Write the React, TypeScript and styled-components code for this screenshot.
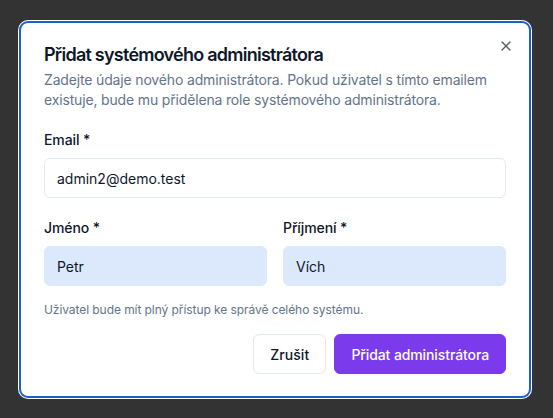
import React from "react";
import styled, { createGlobalStyle } from "styled-components";
import { X } from "lucide-react";

const GlobalStyle = createGlobalStyle`
  html, body {
    margin: 0;
    padding: 0;
    background: #333333;
  }
  body {
    font-family: Inter, "Noto Sans", "Liberation Sans", sans-serif;
    -webkit-font-smoothing: antialiased;
  }
  * { box-sizing: border-box; }
`;

const Overlay = styled.div`
  width: 553px;
  height: 418px;
  padding: 21px 0 0 19px;
  background: #333333;
`;

const Dialog = styled.div`
  position: relative;
  width: 512px;
  height: 377px;
  padding: 25px 25px 24px 25px;
  background: #ffffff;
  border-radius: 9px;
  box-shadow: inset 0 0 0 2px #1c5fd0, 0 0 0 1px #ffffff;
  display: flex;
  flex-direction: column;
`;

const CloseButton = styled.button`
  position: absolute;
  top: 17px;
  right: 17px;
  width: 16px;
  height: 16px;
  padding: 0;
  border: none;
  background: transparent;
  color: #0f172a;
  opacity: 0.7;
  display: flex;
  align-items: center;
  justify-content: center;
  cursor: pointer;
`;

const Header = styled.div`
  display: flex;
  flex-direction: column;
  gap: 6px;
`;

const Title = styled.h2`
  margin: 0;
  font-size: 18px;
  line-height: 18px;
  font-weight: 600;
  letter-spacing: -0.75px;
  color: #0f172a;
`;

const Description = styled.p`
  margin: 0;
  font-size: 14px;
  line-height: 20px;
  letter-spacing: -0.16px;
  color: #64748b;
`;

const Form = styled.div`
  margin-top: 20px;
  display: flex;
  flex-direction: column;
  gap: 20px;
`;

const Row = styled.div`
  display: grid;
  grid-template-columns: 1fr 1fr;
  gap: 16px;
`;

const Field = styled.div`
  display: flex;
  flex-direction: column;
  gap: 8px;
`;

const Label = styled.label`
  font-size: 14px;
  line-height: 20px;
  font-weight: 500;
  letter-spacing: -0.1px;
  color: #0f172a;
`;

const Input = styled.div<{ $autofill?: boolean }>`
  height: 40px;
  padding: 0 12px;
  display: flex;
  align-items: center;
  border-radius: 6px;
  border: 1px solid ${(p) => (p.$autofill ? "#dce9fc" : "#e2e8f0")};
  background: ${(p) => (p.$autofill ? "#dce9fc" : "#ffffff")};
  font-size: 14px;
  color: #0f172a;
`;

const Hint = styled.p`
  margin: 16px 0 0 0;
  font-size: 12px;
  line-height: 16px;
  letter-spacing: -0.07px;
  color: #64748b;
`;

const Footer = styled.div`
  margin-top: 16px;
  display: flex;
  justify-content: flex-end;
  gap: 8px;
`;

const Button = styled.button<{ $primary?: boolean }>`
  height: 40px;
  padding: 0 16px;
  border-radius: 6px;
  font-family: inherit;
  font-size: 14px;
  font-weight: 500;
  letter-spacing: ${(p) => (p.$primary ? "-0.1px" : "0.1px")};
  cursor: pointer;
  border: 1px solid ${(p) => (p.$primary ? "#7c3aed" : "#e2e8f0")};
  background: ${(p) => (p.$primary ? "#7c3aed" : "#ffffff")};
  color: ${(p) => (p.$primary ? "#ffffff" : "#0f172a")};
`;

export default function App() {
  return (
    <>
      <GlobalStyle />
      <Overlay>
        <Dialog>
          <Header>
            <Title>Přidat systémového administrátora</Title>
            <Description>
              Zadejte údaje nového administrátora. Pokud uživatel s tímto emailem existuje, bude mu
              přidělena role systémového administrátora.
            </Description>
          </Header>
          <Form>
            <Field>
              <Label>Email *</Label>
              <Input>admin2@demo.test</Input>
            </Field>
            <Row>
              <Field>
                <Label>Jméno *</Label>
                <Input $autofill>Petr</Input>
              </Field>
              <Field>
                <Label>Příjmení *</Label>
                <Input $autofill>Vích</Input>
              </Field>
            </Row>
          </Form>
          <Hint>Uživatel bude mít plný přístup ke správě celého systému.</Hint>
          <Footer>
            <Button>Zrušit</Button>
            <Button $primary>Přidat administrátora</Button>
          </Footer>
          <CloseButton aria-label="Zavřít">
            <X size={16} strokeWidth={2} />
          </CloseButton>
        </Dialog>
      </Overlay>
    </>
  );
}
